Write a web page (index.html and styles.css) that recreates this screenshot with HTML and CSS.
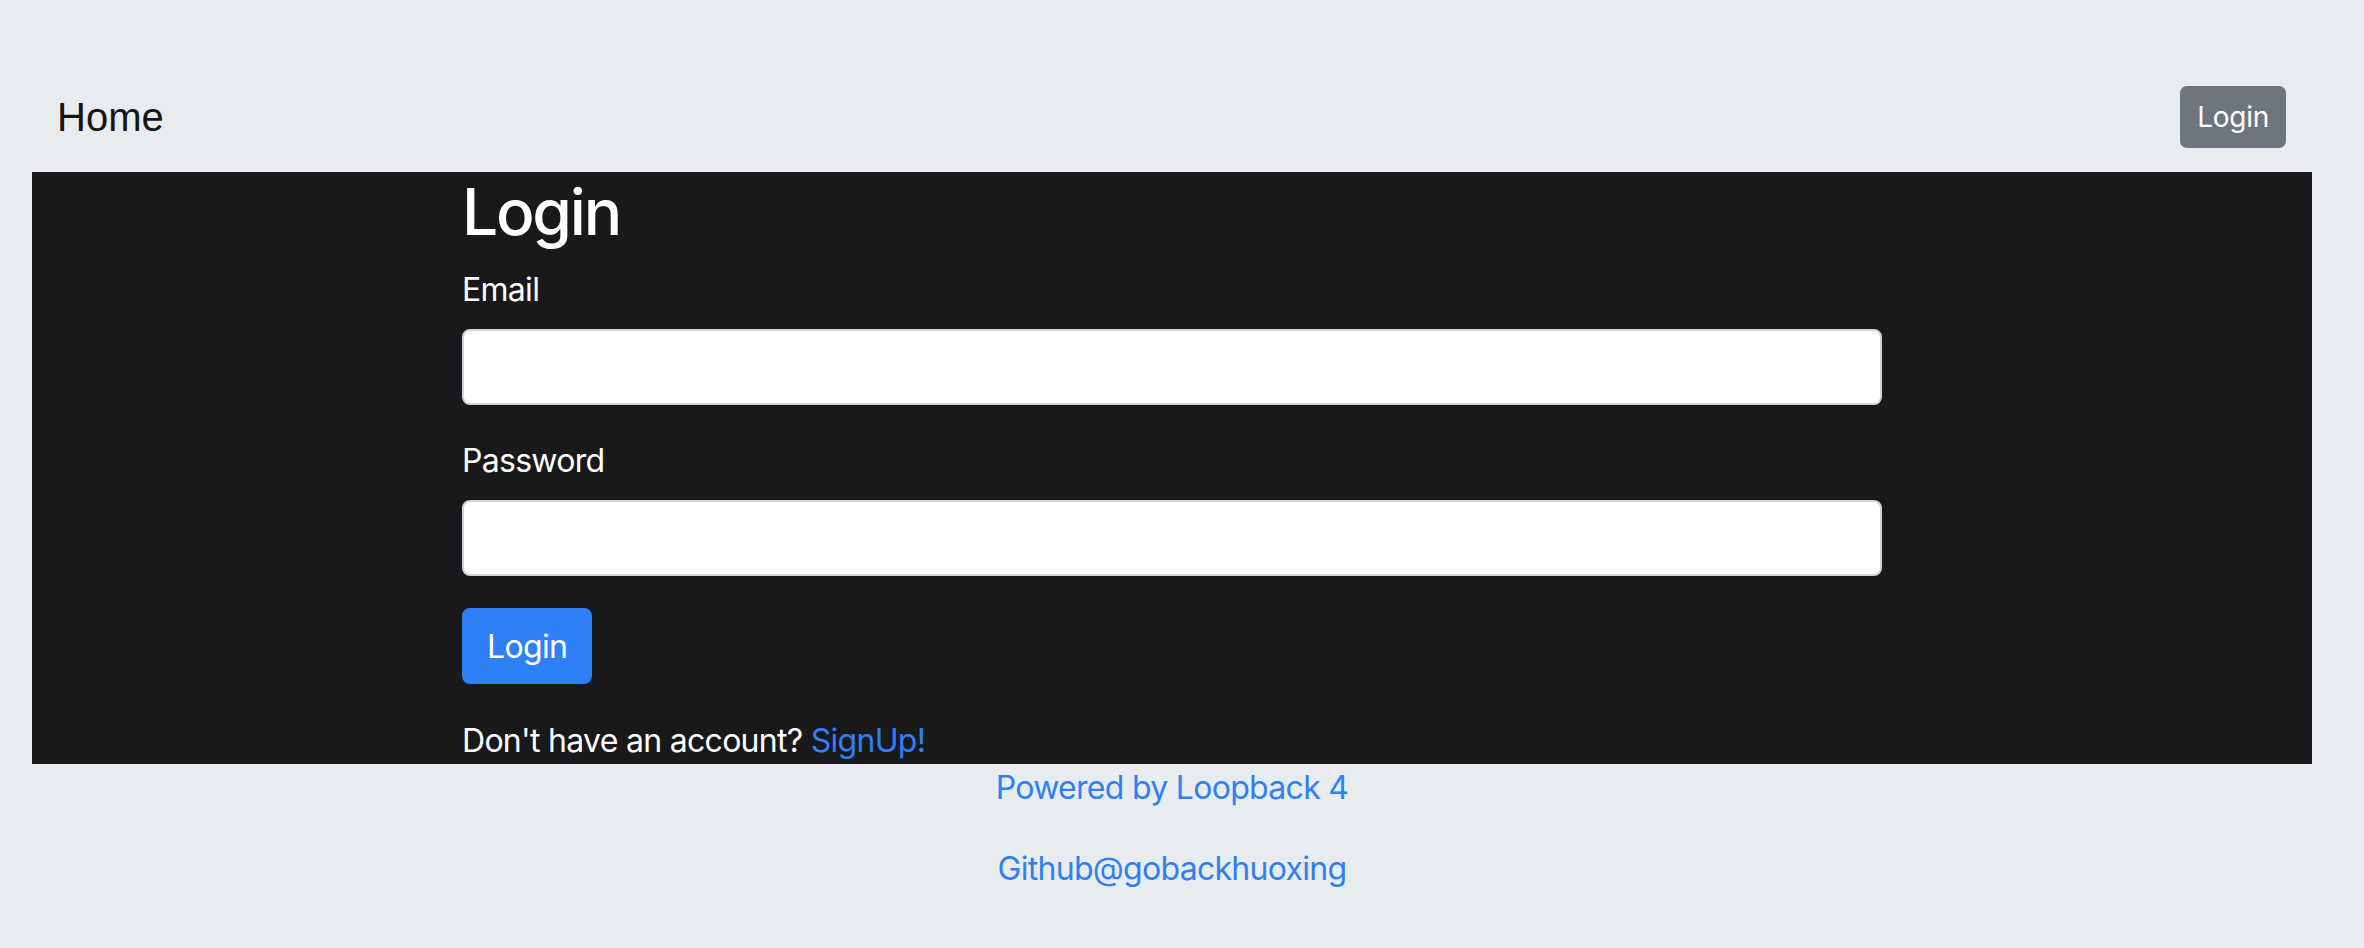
FILE: index.html
```html
<!DOCTYPE html>
<html lang="en">
<head>
<meta charset="utf-8">
<title>Login</title>
<link rel="stylesheet" href="styles.css">
</head>
<body>
<div class="page">
  <nav class="navbar">
    <a class="brand" href="#">Home</a>
    <button class="btn btn-sm btn-secondary" type="button">Login</button>
  </nav>
  <main class="panel">
    <div class="col">
      <h1 class="title">Login</h1>
      <form class="form">
        <div class="group">
          <label class="label" for="email">Email</label>
          <input class="control" id="email" type="email">
        </div>
        <div class="group">
          <label class="label" for="password">Password</label>
          <input class="control" id="password" type="password">
        </div>
        <button class="btn btn-primary" type="button">Login</button>
      </form>
      <p class="signup">Don't have an account? <a class="link" href="#">SignUp!</a></p>
    </div>
  </main>
  <footer class="footer">
    <p class="foot-line"><a class="link" href="#">Powered by Loopback 4</a></p>
    <p class="foot-line"><a class="link" href="#">Github@gobackhuoxing</a></p>
  </footer>
</div>
</body>
</html>
```

FILE: styles.css
```css
* { box-sizing: border-box; }
html, body {
  margin: 0;
  padding: 0;
  background: #e8ecef;
}
body {
  font-family: Inter, "Noto Sans", "Liberation Sans", sans-serif;
  font-size: 32px;
  line-height: 48px;
  letter-spacing: -0.022em;
  color: #19191b;
}
.page {
  padding: 62px 52px 0 32px;
  min-height: 948px;
}
.navbar {
  height: 110px;
  display: flex;
  align-items: center;
  justify-content: space-between;
  padding: 0 26px 0 25px;
}
.brand {
  font-family: "Liberation Sans", Arial, sans-serif;
  font-size: 40px;
  line-height: 60px;
  letter-spacing: 0;
  color: #141414;
  text-decoration: none;
}
.btn {
  font-family: Inter, "Noto Sans", sans-serif;
  letter-spacing: -0.01em;
  border: 2px solid transparent;
  color: #ffffff;
  display: inline-flex;
  align-items: center;
  justify-content: center;
  cursor: pointer;
}
.btn-sm {
  height: 62px;
  padding: 0 15px;
  font-size: 28px;
  border-radius: 7px;
}
.btn-secondary {
  background: #6f757d;
  border-color: #6f757d;
}
.btn-primary {
  background: #2f80f7;
  border-color: #2f80f7;
  height: 76px;
  padding: 0 23px;
  font-size: 32px;
  letter-spacing: -0.02em;
  border-radius: 8px;
}
.panel {
  background: #19191b;
  color: #ffffff;
  padding: 1px 0 0;
}
.col {
  width: 1420px;
  margin: 0 auto;
}
.title {
  margin: 0 0 16px;
  font-size: 64px;
  line-height: 77px;
  font-weight: 500;
  letter-spacing: -0.035em;
}
.form {
  margin: 0;
}
.group {
  margin-bottom: 32px;
}
.label {
  display: block;
  margin-bottom: 15px;
}
.control {
  display: block;
  width: 100%;
  height: 76px;
  border: 2px solid #ced4da;
  border-radius: 8px;
  background: #ffffff;
  font-size: 32px;
  padding: 0 24px;
}
.signup {
  margin: 34px 0 0;
  line-height: 46px;
}
.link {
  color: #2f80f7;
  text-decoration: none;
}
.footer {
  text-align: center;
}
.foot-line {
  margin: 0 0 33px;
}
```
